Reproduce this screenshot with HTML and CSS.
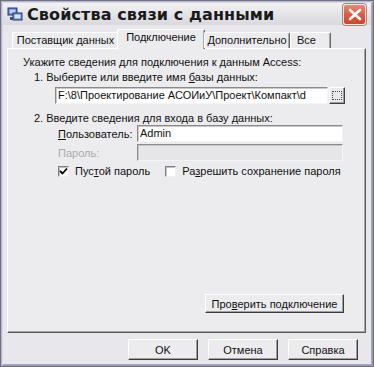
FILE: index.html
```html
<!DOCTYPE html>
<html lang="ru">
<head>
<meta charset="utf-8">
<link rel="stylesheet" href="styles.css">
</head>
<body>
<div class="window">
  <div class="titlebar">
    <svg class="appicon" width="16" height="16" viewBox="0 0 16 16">
      <rect x="1" y="2" width="9" height="7" fill="#5a74b8" stroke="#2a3c78" stroke-width="1"/>
      <rect x="2.5" y="3.5" width="6" height="4" fill="#bcd0f4"/>
      <rect x="6" y="7" width="9" height="7" fill="#6a84c4" stroke="#2a3c78" stroke-width="1"/>
      <rect x="7.5" y="8.5" width="6" height="4" fill="#d4e2fa"/>
      <rect x="3" y="11" width="3" height="3" fill="#3a4e90"/>
    </svg>
    <span class="title">Свойства связи с данными</span>
    <div class="close">
      <svg width="14" height="13" viewBox="0 0 14 13"><path d="M2 2 L12 11 M12 2 L2 11" stroke="#fff" stroke-width="2.6" stroke-linecap="round"/></svg>
    </div>
  </div>
  <div class="client">
    <div class="tabs">
      <div class="tab t1">Поставщик данных</div>
      <div class="tab active t2">Подключение</div>
      <div class="tab t3">Дополнительно</div>
      <div class="tab t4">Все</div>
    </div>
    <div class="panel">
      <div class="line intro">Укажите сведения для подключения к данным Access:</div>
      <div class="line step">1. Выберите или введите имя <u>б</u>азы данных:</div>
      <div class="pathrow">
        <div class="field path">F:\8\Проектирование АСОИиУ\Проект\Компакт\d</div>
        <div class="browse"><span class="dots"></span></div>
      </div>
      <div class="line step step2">2. Введите сведения для входа в базу данных:</div>
      <div class="formrow first">
        <span class="label"><u>П</u>ользователь:</span>
        <div class="field user">Admin</div>
      </div>
      <div class="formrow">
        <span class="label disabled">Пароль:</span>
        <div class="field disabledfield"></div>
      </div>
      <div class="checkrow">
        <span class="check checked">
          <svg width="9" height="9" viewBox="0 0 9 9"><path d="M1 4 L3.5 6.5 L8 1.5" stroke="#000" stroke-width="1.8" fill="none"/></svg>
        </span>
        <span class="checklabel">Пус<u>т</u>ой пароль</span>
        <span class="check second"></span>
        <span class="checklabel">Ра<u>з</u>решить сохранение пароля</span>
      </div>
      <div class="spacer"></div>
      <div class="testrow">
        <button class="btn test">Про<u>в</u>ерить подключение</button>
      </div>
    </div>
    <div class="buttons">
      <button class="btn">OK</button>
      <button class="btn">Отмена</button>
      <button class="btn">Справка</button>
    </div>
  </div>
</div>
</body>
</html>
```
FILE: styles.css
```css
* { box-sizing: border-box; }
html, body { margin: 0; padding: 0; }
body {
  width: 374px;
  height: 367px;
  overflow: hidden;
  background: #e6e6ea;
  font-family: "Liberation Sans", Arial, sans-serif;
  font-size: 11px;
  color: #101010;
}
.window {
  width: 374px;
  height: 367px;
  border: 1px solid #6e6e86;
  box-shadow: inset 1px 1px 0 #b8b8c8, inset -1px -1px 0 #9a9ab0, inset 2px 2px 0 #d8d8e0, inset -2px -2px 0 #a8a8bc;
  background: #e8e8ec;
  display: flex;
  flex-direction: column;
}
.titlebar {
  height: 24px;
  display: flex;
  align-items: center;
  padding: 0 5px 0 4px;
  background: linear-gradient(#f2f2f4, #e2e2e6 60%, #d8d8de);
  margin: 2px 2px 0 2px;
}
.appicon { flex: none; margin-right: 4px; margin-top: -1px; }
.title {
  font-family: "DejaVu Sans", Verdana, sans-serif;
  font-weight: bold;
  font-size: 16px;
  color: #1a1a1a;
  letter-spacing: 0.1px;
  flex: 1;
}
.close {
  width: 23px;
  height: 21px;
  border-radius: 3px;
  background: linear-gradient(#e98a78, #d55a44 55%, #c8482f);
  border: 1px solid #f4e8e4;
  box-shadow: 0 0 0 1px #c07a70;
  display: flex;
  align-items: center;
  justify-content: center;
  margin-top: 1px;
}
.client {
  flex: 1;
  display: flex;
  flex-direction: column;
  padding: 3px 6px 6px 6px;
}
.tabs {
  display: flex;
  align-items: flex-end;
  height: 20px;
  padding-left: 5px;
  position: relative;
  z-index: 1;
}
.tab {
  height: 16px;
  padding: 0;
  text-align: center;
  background: #ececee;
  border-top: 1px solid #fff;
  border-left: 1px solid #fff;
  border-right: 1px solid #6a6a6a;
  box-shadow: inset -1px 0 0 #a8a8a8;
  border-radius: 2px 2px 0 0;
  line-height: 14px;
  white-space: nowrap;
}
.t1 { width: 107px; }
.t3 { width: 86px; }
.t4 { width: 41px; text-align: left; padding-left: 6px; }
.tab.active {
  width: 88px;
  height: 20px;
  margin: 0 -1px -1px -2px;
  background: #ececee;
  line-height: 15px;
}
.panel {
  height: 285px;
  margin-right: 1px;
  background: #ececee;
  border-top: 1px solid #fff;
  border-left: 1px solid #fff;
  border-right: 1px solid #5a5a5a;
  border-bottom: 1px solid #5a5a5a;
  box-shadow: inset -1px -1px 0 #a4a4a4;
  padding: 6px 20px 19px 15px;
  display: flex;
  flex-direction: column;
}
.line { height: 14px; line-height: 14px; white-space: nowrap; }
.step { padding-left: 11px; margin-top: 1px; }
.step2 { margin-top: 7px; }
.pathrow {
  display: flex;
  margin: 3px 0 0 32px;
  height: 17px;
}
.field {
  height: 17px;
  background: #fff;
  border-top: 1px solid #8a8a8a;
  border-left: 1px solid #8a8a8a;
  border-bottom: 1px solid #f4f4f4;
  border-right: 1px solid #f4f4f4;
  box-shadow: inset 1px 1px 0 #c8c8c8;
  padding: 0 2px;
  line-height: 14px;
  white-space: nowrap;
  overflow: hidden;
}
.path { width: 276px; }
.browse {
  width: 16px;
  height: 17px;
  margin-left: 1px;
  background: #eaeaec;
  border-top: 1px solid #fff;
  border-left: 1px solid #fff;
  border-right: 1px solid #404040;
  border-bottom: 1px solid #404040;
  box-shadow: inset -1px -1px 0 #9a9a9a;
  display: flex;
  align-items: center;
  justify-content: center;
}
.dots {
  width: 10px;
  height: 9px;
  border: 1px dotted #444;
}
.formrow {
  display: flex;
  align-items: center;
  margin: 2px 0 0 35px;
  height: 17px;
}
.formrow.first { margin-top: 0; }
.label { width: 79px; white-space: nowrap; }
.label.disabled { color: #a9a9ab; }
.user, .disabledfield { width: 206px; }
.disabledfield { background: #e6e6e8; }
.checkrow {
  display: flex;
  align-items: center;
  margin: 3px 0 0 35px;
  height: 14px;
}
.check {
  width: 11px;
  height: 11px;
  background: #fff;
  border-top: 1px solid #808080;
  border-left: 1px solid #808080;
  border-bottom: 1px solid #f0f0f0;
  border-right: 1px solid #f0f0f0;
  box-shadow: inset 1px 1px 0 #c0c0c0;
  display: flex;
  align-items: center;
  justify-content: center;
  flex: none;
}
.checklabel { margin-left: 6px; white-space: nowrap; }
.check.second { margin-left: 15px; }
.spacer { flex: 1; }
.testrow { display: flex; justify-content: flex-end; margin-right: 1px; }
.btn {
  font-family: "Liberation Sans", Arial, sans-serif;
  font-size: 11px;
  color: #101010;
  background: #ececee;
  border-top: 1px solid #fff;
  border-left: 1px solid #fff;
  border-right: 1px solid #3c3c3c;
  border-bottom: 1px solid #3c3c3c;
  box-shadow: inset -1px -1px 0 #a0a0a0;
  padding: 0;
  height: 21px;
  width: 70px;
  cursor: default;
}
.btn.test { width: 139px; height: 19px; }
.buttons {
  display: flex;
  justify-content: flex-end;
  gap: 10px;
  margin-top: 6px;
  padding-right: 9px;
}
```
